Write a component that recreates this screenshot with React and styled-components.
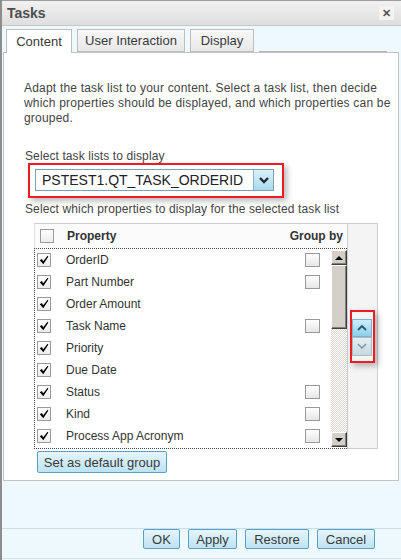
import React from 'react'
import styled, { createGlobalStyle } from 'styled-components'

const GlobalStyle = createGlobalStyle`
  html, body {
    margin: 0;
    padding: 0;
    background: #eef9fd;
  }
  body {
    font-family: "Liberation Sans", Arial, sans-serif;
    color: #333;
  }
`

const properties = [
  { name: 'OrderID', group: true },
  { name: 'Part Number', group: true },
  { name: 'Order Amount', group: false },
  { name: 'Task Name', group: true },
  { name: 'Priority', group: false },
  { name: 'Due Date', group: false },
  { name: 'Status', group: true },
  { name: 'Kind', group: true },
  { name: 'Process App Acronym', group: true },
]

const tabs = [
  { label: 'Content', width: 66, active: true },
  { label: 'User Interaction', width: 108 },
  { label: 'Display', width: 64 },
]

const Tick = () => (
  <svg width="10" height="10" viewBox="0 0 10 10">
    <path d="M0.8 5.2 L2.9 4.1 L4.2 6.2 L8.6 0.8 L9.4 1.5 L4.3 9.2 Z" fill="#000" />
  </svg>
)

const Chevron = ({ up, color, width = 2 }) => (
  <svg width="10" height="7" viewBox="0 0 10 7">
    <polyline
      points={up ? '1,6 5,2 9,6' : '1,1 5,5 9,1'}
      fill="none"
      stroke={color}
      strokeWidth={width}
    />
  </svg>
)

function App() {
  return (
    <Dialog>
      <GlobalStyle />
      <TitleBar>
        <Title>Tasks</Title>
        <CloseBox>✕</CloseBox>
      </TitleBar>

      <TabBar>
        {tabs.map((tab) => (
          <Tab key={tab.label} $active={tab.active} $width={tab.width}>
            {tab.label}
          </Tab>
        ))}
        <TabFiller />
      </TabBar>

      <Panel>
        <Description>
          Adapt the task list to your content. Select a task list, then decide
          <br />
          which properties should be displayed, and which properties can be
          <br />
          grouped.
        </Description>

        <Label>Select task lists to display</Label>
        <Highlight>
          <Select>
            <SelectValue>PSTEST1.QT_TASK_ORDERID</SelectValue>
            <SelectButton>
              <Chevron color="#1d2a33" width={2.4} />
            </SelectButton>
          </Select>
        </Highlight>

        <SubLabel>Select which properties to display for the selected task list</SubLabel>

        <Table>
          <ListColumn>
            <Header>
              <CheckBox />
              <HeaderText>Property</HeaderText>
              <HeaderRight>Group by</HeaderRight>
            </Header>
            <List>
              <Rows>
                {properties.map((p) => (
                  <Row key={p.name}>
                    <CheckBox>
                      <Tick />
                    </CheckBox>
                    <RowLabel>{p.name}</RowLabel>
                    {p.group && <GroupBox />}
                  </Row>
                ))}
              </Rows>
              <ScrollBar>
                <ScrollButton>
                  <Arrow $up />
                </ScrollButton>
                <Thumb />
                <Track />
                <ScrollButton>
                  <Arrow />
                </ScrollButton>
              </ScrollBar>
            </List>
          </ListColumn>
          <SideStrip>
            <MoveHighlight>
              <MoveButton $enabled>
                <Chevron up color="#1f5a74" width={1.8} />
              </MoveButton>
              <MoveButton>
                <Chevron color="#7b909a" width={1.4} />
              </MoveButton>
            </MoveHighlight>
          </SideStrip>
        </Table>

        <DefaultButton>Set as default group</DefaultButton>
      </Panel>

      <Spacer />

      <Footer>
        <Button $width={37}>OK</Button>
        <Button $width={49}>Apply</Button>
        <Button $width={64}>Restore</Button>
        <Button $width={58}>Cancel</Button>
      </Footer>
    </Dialog>
  )
}

export default App

const Dialog = styled.div`
  width: 401px;
  height: 560px;
  box-sizing: border-box;
  display: flex;
  flex-direction: column;
  background: #eef9fd;
  border-left: 2px solid #8d8d8d;
  overflow: hidden;
`

const TitleBar = styled.div`
  height: 26px;
  box-sizing: border-box;
  display: flex;
  align-items: center;
  justify-content: space-between;
  padding: 0 7px 0 5px;
  border-top: 1px solid #9c9c9c;
  border-bottom: 1px solid #c6c6c6;
  background: linear-gradient(#f1f1f1, #dedede);
`

const Title = styled.div`
  font-size: 14px;
  font-weight: bold;
  color: #4e4e4e;
`

const CloseBox = styled.div`
  width: 15px;
  height: 14px;
  display: flex;
  align-items: center;
  justify-content: center;
  background: #f3f3f3;
  color: #555;
  font-size: 11px;
  font-weight: bold;
`

const TabBar = styled.div`
  height: 26px;
  box-sizing: border-box;
  display: flex;
  align-items: flex-end;
  gap: 5px;
  padding: 3px 0 0 4px;
  position: relative;
  z-index: 1;
`

const Tab = styled.div`
  width: ${(p) => p.$width}px;
  height: ${(p) => (p.$active ? 24 : 23)}px;
  margin-bottom: ${(p) => (p.$active ? -1 : 0)}px;
  box-sizing: border-box;
  display: flex;
  align-items: center;
  justify-content: center;
  font-size: 13px;
  color: #3a3a3a;
  border: 1px solid #bdbdbd;
  border-bottom: ${(p) => (p.$active ? 'none' : '1px solid #bdbdbd')};
  background: ${(p) => (p.$active ? '#fff' : 'linear-gradient(#f8f8f8, #e8e8e8)')};
`

const TabFiller = styled.div`
  width: 128px;
  height: 1px;
  background: #b5b5b5;
`

const Panel = styled.div`
  height: 429px;
  box-sizing: border-box;
  margin: 0 2px 0 1px;
  padding: 28px 20px 0 20px;
  background: #fff;
  border: 1px solid #c3c3c3;
  display: flex;
  flex-direction: column;
  align-items: flex-start;
`

const Description = styled.p`
  margin: 0;
  font-size: 12px;
  line-height: 15px;
  letter-spacing: 0.2px;
  white-space: nowrap;
  color: #444;
`

const Label = styled.div`
  margin: 24px 0 0 1px;
  font-size: 12px;
  line-height: 13px;
  letter-spacing: 0.1px;
  color: #444;
`

const Highlight = styled.div`
  margin: 0 0 0 4px;
  padding: 4px 8px 5px 5px;
  border: 2px solid #ec1c24;
  box-shadow: 3px 3px 6px rgba(0, 0, 0, 0.28);
`

const Select = styled.div`
  width: 239px;
  height: 22px;
  box-sizing: border-box;
  display: flex;
  border: 1px solid #7f9fb6;
  background: #fff;
`

const SelectValue = styled.div`
  flex: 1;
  padding-left: 6px;
  display: flex;
  align-items: center;
  font-size: 14px;
  color: #222;
`

const SelectButton = styled.div`
  width: 19px;
  display: flex;
  align-items: center;
  justify-content: center;
  border-left: 1px solid #8fb3c6;
  background: linear-gradient(#dcf1fb, #a8d9ef);
`

const SubLabel = styled.div`
  margin: 4px 0 0 1px;
  font-size: 12px;
  line-height: 14px;
  letter-spacing: 0.12px;
  color: #444;
`

const Table = styled.div`
  margin: 7px 0 0 10px;
  width: 344px;
  display: flex;
`

const ListColumn = styled.div`
  width: 313px;
  display: flex;
  flex-direction: column;
`

const Header = styled.div`
  height: 24px;
  display: flex;
  align-items: center;
  padding: 0 4px 0 5px;
  border-top: 1px solid #cdcdcd;
  border-left: 1px solid #e2e2e2;
  background: #fbfbfb;
`

const HeaderText = styled.span`
  margin-left: 13px;
  font-size: 12px;
  font-weight: bold;
  color: #333;
`

const HeaderRight = styled(HeaderText)`
  margin-left: auto;
`

const List = styled.div`
  height: 201px;
  box-sizing: border-box;
  display: flex;
  border: 1px dotted #444;
  border-right: none;
  padding-bottom: 1px;
`

const Rows = styled.div`
  flex: 1;
  display: flex;
  flex-direction: column;
  padding-left: 2px;
`

const Row = styled.div`
  height: 22px;
  display: flex;
  align-items: center;
`

const CheckBox = styled.span`
  width: 14px;
  height: 14px;
  box-sizing: border-box;
  display: flex;
  align-items: center;
  justify-content: center;
  border: 1px solid #9a9a9a;
  background: linear-gradient(#ffffff, #ececec);
`

const GroupBox = styled(CheckBox)`
  width: 15px;
  margin: 0 11px 0 auto;
  background: linear-gradient(#ffffff, #e6e6e6);
`

const RowLabel = styled.span`
  margin-left: 15px;
  font-size: 12px;
  color: #333;
`

const ScrollBar = styled.div`
  width: 16px;
  margin-top: 1px;
  display: flex;
  flex-direction: column;
`

const raised = `
  box-sizing: border-box;
  background: #d4d0c8;
  border-top: 1px solid #fff;
  border-left: 1px solid #fff;
  border-right: 1px solid #404040;
  border-bottom: 1px solid #404040;
  box-shadow: inset -1px -1px #808080;
`

const ScrollButton = styled.div`
  ${raised}
  height: 15px;
  display: flex;
  align-items: center;
  justify-content: center;
`

const Arrow = styled.span`
  width: 0;
  height: 0;
  border-left: 4px solid transparent;
  border-right: 4px solid transparent;
  ${(p) => (p.$up ? 'border-bottom: 4px solid #000;' : 'border-top: 4px solid #000;')}
`

const Thumb = styled.div`
  ${raised}
  height: 64px;
`

const Track = styled.div`
  flex: 1;
  background-color: #fff;
  background-image: repeating-conic-gradient(#dcd9d2 0 25%, #fff 0 50%);
  background-size: 2px 2px;
`

const SideStrip = styled.div`
  flex: 1;
  display: flex;
  align-items: center;
  padding-left: 2px;
  border: 1px solid #cdcdcd;
  background: #f4f4f4;
`

const MoveHighlight = styled.div`
  display: flex;
  flex-direction: column;
  padding: 7px 1px 5px 0;
  border: 2px solid #ec1c24;
  box-shadow: 3px 3px 6px rgba(0, 0, 0, 0.28);
`

const MoveButton = styled.div`
  width: 20px;
  height: ${(p) => (p.$enabled ? 18 : 19)}px;
  box-sizing: border-box;
  display: flex;
  align-items: center;
  justify-content: center;
  border: 1px solid ${(p) => (p.$enabled ? '#7fb2c9' : '#a9bcc6')};
  background: ${(p) =>
    p.$enabled ? 'linear-gradient(#cdeefb, #8dcfea)' : 'linear-gradient(#e4eef2, #c6d8e0)'};
`

const Button = styled.div`
  width: ${(p) => p.$width}px;
  height: 20px;
  box-sizing: border-box;
  display: flex;
  align-items: center;
  justify-content: center;
  font-size: 13px;
  color: #3a3a3a;
  border: 1px solid #5b9fc2;
  border-radius: 2px;
  background: linear-gradient(#e6f5fc, #bde3f4);
`

const DefaultButton = styled(Button)`
  width: 130px;
  height: 22px;
  margin: 2px 0 0 13px;
`

const Spacer = styled.div`
  flex: 1;
`

const Footer = styled.div`
  display: flex;
  justify-content: flex-end;
  gap: 8px;
  padding: 0 26px 9px 0;
  margin-bottom: 1px;
  border-top: 1px solid #cadfe8;
  border-bottom: 1px solid #d6e3e9;
`
